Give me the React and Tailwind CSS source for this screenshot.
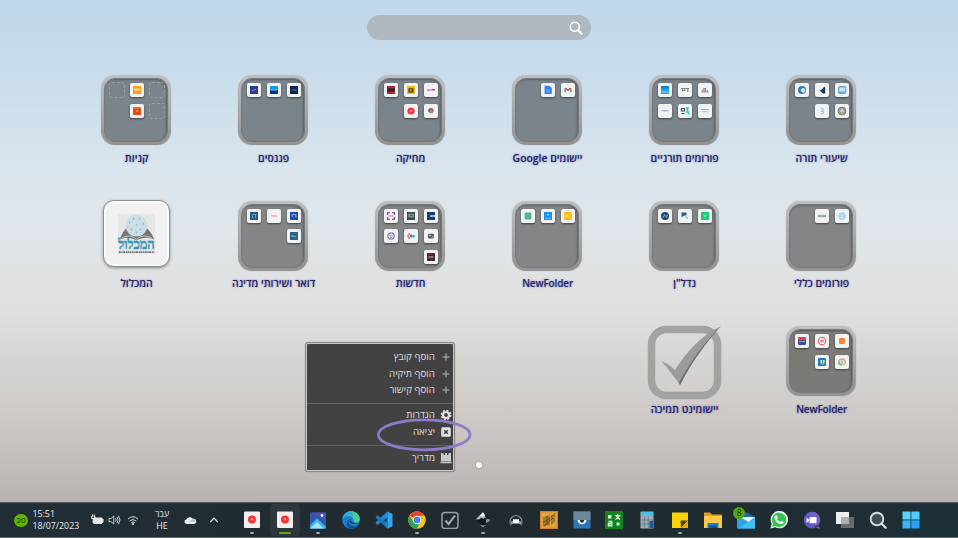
import React from "react";

const R = (x, y, w, h, fill, rx = 0) => <rect key={`${x}-${y}-${fill}`} x={x} y={y} width={w} height={h} fill={fill} rx={rx} />;

// Drawings for the miniature app icons, on a 14 x 14 canvas
const art = {
  orange: <>{R(3, 3, 8, 8, "#ff9a1a")}{R(4, 5.6, 6, 2, "#ffe0a8", 1)}</>,
  red: <>{R(3, 3, 8, 8, "#e8481c")}{R(3, 3, 8, 1.6, "#f0742e")}{R(6, 6.5, 2.5, 1, "#f7a58a")}</>,
  navy: <>{R(3, 3, 8, 8, "#2c3990")}<path d="M4.8 7.8 9.2 6.2" stroke="#8f9ad8" strokeWidth=".9" /></>,
  blueSplit: <>{R(3, 3, 8, 4.5, "#149be4")}{R(3, 7, 8, 4, "#0b3580")}{R(4, 6.6, 6, 0.9, "#8fd2f7")}</>,
  darkNavy: <>{R(3, 3, 8, 8, "#0c2353")}{R(4.5, 6.4, 5, 1.2, "#3e7c98")}</>,
  redBlack: <>{R(3, 3, 8, 8, "#bd2430")}{R(3, 5.2, 8, 3.4, "#30282b")}</>,
  yellow: <>{R(3, 3, 8, 8, "#f0bc19")}{R(4.4, 5.2, 5.2, 4.4, "#5b4a14")}{R(6, 6, 1.6, 2.5, "#c89d20")}</>,
  pinkText: <>{R(3, 6.3, 8, 1.5, "#d980ad")}{R(8, 6, 3, 1, "#bb3b80")}</>,
  redDot: <><circle cx="7" cy="7" r="3.6" fill="#fb3440" /><circle cx="7" cy="7" r="1" fill="#fba2a6" /></>,
  tinyPerson: <><circle cx="7" cy="6.6" r="2.6" fill="#8d6b62" /><path d="M5 5.5v2.5" stroke="#3e5a92" fill="none" /><circle cx="7.3" cy="7.6" r="1.1" fill="#e49a50" /></>,
  docs: <><path d="M3.6 2.8h4.8l2.4 2.3v6H3.6z" fill="#2f83f5" /><path d="M5.2 7h3.8M5.2 8.7h3.8" stroke="#8dbcff" strokeWidth=".8" /></>,
  gmail: <><path d="M4.2 9V5.2" stroke="#4285f4" strokeWidth="1.4" /><path d="M9.8 9V5.2" stroke="#34a853" strokeWidth="1.4" /><path d="m4.2 5.2 2.8 2.1 2.8-2.1" stroke="#ea4335" strokeWidth="1.4" fill="none" /></>,
  sky: <>{R(3, 3, 8, 8, "#2aa2da")}{R(3, 3, 8, 2.5, "#1685bf")}{R(3.5, 8.5, 7, 1, "#8ed2ef")}</>,
  grayText: <path d="M3 5.5h8M4.5 5.5v3M6.8 5.5V8M9.8 5.5v3.5M4.5 7.5h3" stroke="#85878d" strokeWidth="1.2" />,
  grayBuilding: <path d="M3.5 8.8h7M4.5 8V6.5M6 8V5.5h1.5V8M9.3 8V7" stroke="#8b8e94" strokeWidth="1.2" fill="none" />,
  lilacText: <>{R(3.2, 6.2, 7.6, 1, "#aaa4c4")}{R(5, 7.2, 4, .7, "#c4c0d7")}</>,
  greenCross: <><path d="M3.5 4.5h3v2.5h-3zM3.5 9.5h3" stroke="#4b4d52" strokeWidth="1.2" fill="none" /><path d="M8 4h2.8M9.5 4v3M8 8h2.5v2.5" stroke="#27c9b8" strokeWidth="1.6" fill="none" /></>,
  paleText: <>{R(3, 5, 8, 1, "#abb1b1")}{R(3.3, 7, 7.4, .8, "#c6c9c9")}{R(4, 8.5, 6, .6, "#d6d8d8")}</>,
  swirl: <><circle cx="7" cy="7" r="4" fill="#2e78ba" /><circle cx="8.3" cy="7.3" r="2.4" fill="#dbe8f2" /><path d="M8.5 4.5q2.5.5 2 3" stroke="#3f86c4" fill="none" /></>,
  blackArrow: <path d="M10.2 3.8v6.8H7.5L6.5 9 4.5 7.2l2.4-.8 1.5-2z" fill="#173a52" />,
  screen: <>{R(3, 3, 8.4, 8, "#68a9d0", 2)}{R(4.2, 4.6, 6, 4, "#c9e2f0", 1)}</>,
  brace: <path d="M5.5 4.2C9 4 9 6 7.6 6.8 9 7.5 9 10 5.5 10M5.5 7h3" stroke="#81b0c6" strokeWidth=".9" fill="none" />,
  seal: <><circle cx="7" cy="7" r="4" fill="#9d9c98" /><path d="M4.8 7.8 7 4.6l2 3.2z" fill="#e0e2e4" /><circle cx="7" cy="8.6" r="1.2" fill="#cbb86c" /><circle cx="7" cy="7" r="4" stroke="#6b7076" fill="none" strokeWidth=".7" /></>,
  steel: <>{R(3, 3, 8, 8, "#285b86")}<path d="M5.5 5.5h3v3.5M5.5 6.5v2.5" stroke="#8fadc6" fill="none" strokeWidth=".8" /></>,
  thinRed: <path d="M4.5 6.2q1.5 1.5 3 .7t2.5.8" stroke="#ea8587" fill="none" strokeWidth="1" />,
  royal: <>{R(3, 3, 8, 8, "#1c4eae")}<path d="M4.8 5.5h4v3M5.3 6v2" stroke="#b4c8f0" fill="none" strokeWidth=".8" /></>,
  teal: <>{R(3, 3, 8, 8, "#2b6586")}<path d="M4.5 7.2h4.5M5 6v1" stroke="#8fb8cb" /></>,
  purpleFrame: <><path d="M3.6 6V3.6H6M8 3.6h2.4V6M10.4 8v2.4H8M6 10.4H3.6V8" stroke="#8050a7" strokeWidth="1.3" fill="none" />{R(4.5, 6.4, 5, 1.2, "#c888bb")}</>,
  darkScreen: <>{R(3, 3, 8, 8, "#374d51")}{R(4.5, 4.8, 5, 3.5, "#a9b8b5")}{R(5.3, 5.5, 3.3, 2, "#4c6064")}</>,
  darkBlue: <>{R(3, 3, 8, 8, "#1d3e68")}{R(6, 6, 5, 2, "#9bb3cf")}</>,
  purpleRing: <><circle cx="7" cy="7" r="3.2" stroke="#8b7abd" fill="none" strokeWidth="1.2" /><path d="M5.3 6.2 7 7.6l1.8-2M6 8.4h2" stroke="#9d8fca" fill="none" /></>,
  redBlue: <><path d="M6 4.8c-2.5 0-2.5 4.4 0 4.4" stroke="#f0737d" strokeWidth="1.7" fill="none" />{R(6, 5.5, 2.5, 3, "#337da6", 1)}{R(8.3, 6, 2.8, 2.6, "#49b0d8", 1)}</>,
  blackText: <>{R(4, 4.8, 6, 4.6, "#55606b", .8)}<path d="M5.2 6.5h2M8 8h1.5" stroke="#d5d9dc" strokeWidth=".8" /></>,
  darkRed: <>{R(3, 3, 8, 8, "#48282c")}{R(4.5, 6.3, 5, 1.5, "#a9898c")}{R(4.5, 4.2, 4, .8, "#8d3535")}</>,
  greenSq: R(3.6, 3.6, 6.8, 6.8, "#4fb698", 1),
  appBlue: <>{R(3, 3, 8, 8, "#1590f5")}<circle cx="7" cy="5.8" r="1" fill="#a9d7ff" />{R(4, 8.8, 6, .8, "#8ec9fc")}</>,
  amber: <>{R(3, 3, 8, 8, "#fdbd16")}{R(4, 6, 3.5, 2.3, "#f0d27d")}</>,
  darkRound: <><circle cx="7" cy="7" r="4" fill="#244569" /><path d="M4.5 9 6.5 6l2 2 1.2-2.5" stroke="#5f9ed2" strokeWidth="1.2" fill="none" /></>,
  shardK: <><path d="M3.5 3.5h5v3H6l-2.5 2z" fill="#3a5a75" /><path d="M7 7.5 9.8 9.5" stroke="#9ab0c0" strokeWidth="1.2" /></>,
  greenPin: <>{R(3, 3, 8, 8, "#22c880")}<path d="M5 5.7h4L7 8.8z" fill="#72dfb0" /></>,
  news: <>{R(3, 5.8, 8, 2.3, "#849a9a")}{R(4, 6.5, 6, .7, "#c1cccc")}</>,
  paleBlue: <><circle cx="7" cy="7" r="3.8" fill="#a5d3e8" /><path d="M4 6h6M4.5 8.5h5M6.6 4v6" stroke="#d2eaf4" strokeWidth=".7" /></>,
  flag: <>{R(3, 3, 8, 8, "#334c9b", 1.5)}{R(3, 3, 8, 3.2, "#e4434d", 1)}{R(4, 7.3, 6, .8, "#afbee5")}</>,
  redRing: <><circle cx="7" cy="7" r="3.7" stroke="#e86a70" fill="none" strokeWidth="1.2" />{R(4.8, 5.8, 4.4, 2.4, "#ed8a8e", 1)}</>,
  orangeSm: R(4, 4, 6, 6, "#fb8428", 1),
  blueLeaf: <>{R(3, 3, 8, 8, "#187bd0", 1)}<path d="M5.4 5h4.3v3L7.3 10 5.4 8z" fill="#c9e4a4" /><path d="M7.5 5v4" stroke="#38965b" /></>,
  chromeish: <><path d="M3.9 6a3.4 3.4 0 0 1 6.2 0" stroke="#e49a83" strokeWidth="1.4" fill="none" /><path d="M3.9 6v2.7L7 10" stroke="#6ebe91" strokeWidth="1.8" fill="none" /><path d="M10.1 6v2.7L7.5 10" stroke="#e6ba61" strokeWidth="1.7" fill="none" /><circle cx="7" cy="7" r="1.5" fill="#9ac4e3" /></>,
};

function Mini({ name }) {
  if (!name) return <span />;
  if (name === "slot")
    return <span className="-m-px h-4 w-4 rounded-[3px] border border-dashed border-[#949ea5]" />;
  return (
    <span className="h-[14px] w-[14px] rounded-[2px] bg-[#f1f2f3] shadow-[0_1px_2px_rgba(0,0,0,0.5)]">
      <svg className="block h-full w-full" viewBox="0 0 14 14">{art[name]}</svg>
    </span>
  );
}

const tones = {
  cool: "bg-[#7b848a]",
  mid: "bg-[#838586]",
  warm: "bg-[#7b7a77]",
};

function Folder({ minis, tone }) {
  return (
    <div className="h-[70px] w-[70px] rounded-[14px] bg-linear-to-b from-[#bcbebf] to-[#929292] p-[3px] shadow-[0_0_1px_rgba(110,110,110,0.5)]">
      <div className={`grid h-full w-full grid-cols-[14px_14px_14px] auto-rows-[14px] gap-x-[6px] gap-y-[6.5px] rounded-[11px] border border-[#777a7c] pt-[4px] pl-[5px] shadow-[inset_-1px_1px_2px_rgba(50,50,50,0.45)] ${tones[tone]}`}>
        {minis.map((m, i) => <Mini key={i} name={m} />)}
      </div>
    </div>
  );
}

function Hamichlol() {
  return (
    <div className="h-[67px] w-[67px] rounded-[11px] border border-[#8e9192] bg-[#f1f1f1] shadow-[0_1px_3px_rgba(0,0,0,0.4),inset_0_0_0_1.5px_#fff]">
      <svg className="block h-full w-full" viewBox="0 0 66 66">
        <rect x="14" y="13" width="38" height="41" fill="#e6e6e6" />
        <path d="M16 39c3-7 5-11 9-12l8 8 8-8c4 1 7 5 10 12-7-3-12-2-18 1-6-3-10-4-17-1z" fill="#777" />
        <path d="M18 38c4-3 10-4 15 1 5-5 11-4 16-1" stroke="#c8c8c8" fill="none" />
        <circle cx="33" cy="25" r="11" fill="#cbdde5" />
        <path d="M26 21v2M30 17v2M36 17v2M40 22v2M33 23v2M28 28v2M37 28v2M33 31v2M24 26v1" stroke="#84bccf" strokeWidth="1.2" />
        <text x="33" y="49" textAnchor="middle" textLength="37" lengthAdjust="spacingAndGlyphs" fontSize="14" fontWeight="700" fill="#3798b4" stroke="#3798b4" strokeWidth=".5" fontFamily="'Liberation Serif', 'DejaVu Sans', serif">המכלול</text>
        <path d="M15 52h36" stroke="#6e7475" strokeWidth="1.8" strokeDasharray="2 .7 1.2 .5" />
      </svg>
    </div>
  );
}

function CheckApp() {
  return (
    <svg className="mt-[3px] h-[75px] w-[75px] shrink-0" viewBox="0 0 75 75">
      <rect x="4.5" y="4.5" width="66" height="66" rx="15" fill="none" stroke="#a2a2a2" strokeWidth="7.5" />
      <path d="M14 36c7 3 11 6 14 9C41 25 54 11 74 1 59 18 45 36 33 60 27 52 21 43 14 36z" fill="#9b9b9a" />
      <path d="M74 1C59 18 45 36 33 60l-1-2.5C44 35 58 17 74 1z" fill="#6f6f6e" />
    </svg>
  );
}

const _ = null;
const items = [
  ["קניות", "cool", ["slot", "orange", "slot", _, "red", "slot"]],
  ["פננסים", "cool", ["navy", "blueSplit", "darkNavy"]],
  ["מחיקה", "cool", ["redBlack", "yellow", "pinkText", _, "redDot", "tinyPerson"]],
  ["יישומים Google", "cool", [_, "docs", "gmail"]],
  ["פורומים תורניים", "cool", ["sky", "grayText", "grayBuilding", "lilacText", "greenCross", "paleText"]],
  ["שיעורי תורה", "cool", ["swirl", "blackArrow", "screen", _, "brace", "seal"]],
  ["המכלול", "site"],
  ["דואר ושירותי מדינה", "mid", ["steel", "thinRed", "royal", _, _, "teal"]],
  ["חדשות", "mid", ["purpleFrame", "darkScreen", "darkBlue", "purpleRing", "redBlue", "blackText", _, _, "darkRed"]],
  ["NewFolder", "mid", ["greenSq", "appBlue", "amber"]],
  ["נדל\"ן", "mid", ["darkRound", "shardK", "greenPin"]],
  ["פורומים כללי", "mid", [_, "news", "paleBlue"]],
  ["יישומינט תמיכה", "check"],
  ["NewFolder", "warm", ["flag", "redRing", "orangeSm", _, "blueLeaf", "chromeish"]],
];

function Item({ item, className = "" }) {
  const [label, kind, minis] = item;
  return (
    <div className={`flex h-[125.5px] flex-col items-center ${className}`}>
      <div className="flex h-[70px] items-center justify-center">
        {kind === "site" ? <div className="-mt-1 ml-px"><Hamichlol /></div> : kind === "check" ? <CheckApp /> : <Folder minis={minis} tone={kind} />}
      </div>
      <div
        dir="rtl"
        className={`mt-[5.5px] ml-[0.6px] leading-[15px] whitespace-nowrap text-[#24246c] [text-shadow:0_0_2px_rgba(60,60,140,0.6)] ${label === "NewFolder" ? "text-[10px] font-semibold tracking-[-0.15px]" : "text-[10.4px] font-semibold"}`}
      >
        {label}
      </div>
    </div>
  );
}

const Plus = () => <path d="M6 2.5v7M2.5 6h7" stroke="#b9b9b9" strokeWidth="1" />;
const Gear = () => (
  <>
    <circle cx="6" cy="6" r="3" fill="none" stroke="#e4e4e4" strokeWidth="2.2" />
    <circle cx="6" cy="6" r="4.6" fill="none" stroke="#e4e4e4" strokeWidth="1.5" strokeDasharray="1.9 1.71" />
  </>
);
const Exit = () => (
  <>
    <rect x="1.2" y="1.2" width="9.6" height="9.6" rx="1.5" fill="#e2e2e2" />
    <path d="m4.2 4.2 3.6 3.6M7.8 4.2 4.2 7.8" stroke="#424242" strokeWidth="1.6" />
  </>
);
const Guide = () => <path d="M1 1h2l1 2h1V1h2v2h1l1-2h2v8H1zM.5 9.5h11v1.7H.5z" fill="#cacaca" />;

function MenuRow({ icon, children }) {
  return (
    <div className="flex h-[16.5px] items-center justify-start gap-[5px] pr-px">
      <svg className="h-3 w-3" viewBox="0 0 12 12">{icon}</svg>
      <span className="text-[9.8px] leading-none font-medium text-[#dedede]">{children}</span>
    </div>
  );
}

function ContextMenu() {
  return (
    <div dir="rtl" className="absolute top-[342px] left-[305px] h-[130px] w-[150px] rounded-[3px] border border-[#8a8a8a] bg-[#c6c6c6] p-[1px] shadow-[0_0_1px_rgba(0,0,0,0.4)]">
      <div className="flex h-full flex-col rounded-[1px] bg-[#424242] pt-[5px]">
        <MenuRow icon={<Plus />}>הוסף קובץ</MenuRow>
        <MenuRow icon={<Plus />}>הוסף תיקיה</MenuRow>
        <MenuRow icon={<Plus />}>הוסף קישור</MenuRow>
        <div className="mt-[4px] mb-[3.5px] h-px bg-[#626262]" />
        <MenuRow icon={<Gear />}>הגדרות</MenuRow>
        <MenuRow icon={<Exit />}>יציאה</MenuRow>
        <div className="mt-[4.5px] mb-[4.5px] h-px bg-[#626262]" />
        <MenuRow icon={<Guide />}>מדריך</MenuRow>
      </div>
    </div>
  );
}

const recorder = (
  <>
    <rect x="1" y=".5" width="16" height="16.5" rx="1" fill="#f3efee" />
    <circle cx="9" cy="8.5" r="4" fill="#f5323b" />
    <circle cx="9" cy="8.3" r="1.2" fill="#fa9a96" />
  </>
);

const apps = [
  { dot: true, art: recorder },
  { active: true, art: recorder },
  { dot: true, art: <>
    <rect x="1" y="1.5" width="16" height="16" rx="1" fill="#3159ae" />
    <path d="M1 1.5h16v8L9 6z" fill="#4b4fae" />
    <path d="M1 17.5v-3l7-7.2 9 8.7v1.5z" fill="#3cb2f0" />
    <path d="M1 17.5 8 11l7 6.5z" fill="#a3e0fb" />
    <circle cx="13" cy="4.5" r="1.4" fill="#e8f0ff" />
  </> },
  { art: <>
    <circle cx="9" cy="9" r="8.8" fill="#1a80cf" />
    <path d="M.5 8C2 1.5 7 0 10 .3c5 .3 8 4.5 7.8 8.2-.3 2.8-3 3.8-6.3 2.8C13 7 8.5 4 4.5 5 2.5 5.6 1 6.8.5 8z" fill="#47cd9c" />
    <path d="M.5 8C2 1.5 7 0 10 .3l1 5.5C7 3.5 3 4.5.5 8z" fill="#2cacd9" />
    <path d="M7 8c-2 4 1 8.5 8.5 7A8.8 8.8 0 0 1 9 17.8C4.5 17.5 3 11 7 8z" fill="#124e96" />
    <path d="M9.3 7.5c-1.5 1-1.5 5.5 7.7 4.3-4 1.7-8.5 1.2-9.3-1.3-.3-1.3.4-2.7 1.6-3z" fill="#1c2b33" />
  </> },
  { art: <>
    <path d="M12.5.5 17.5 3v12.2L12.5 17.7z" fill="#35a5ee" />
    <path d="M12.5.5 1 11l-.5 1.3L2.5 14 13.5 5.6z" fill="#2489d3" />
    <path d="M12.5 17.7 1 7l-.5-1.2L2.5 4.3 13.5 12.5z" fill="#1877bf" />
    <path d="M12.5.5v17.2l-1-1V1.5z" fill="#238dd9" />
  </> },
  { dot: true, art: <>
    <circle cx="9" cy="9" r="8.8" fill="#f5c12b" />
    <path d="M9 9 1.4 4.6A8.8 8.8 0 0 1 16.6 4.6L9 5z" fill="#e64335" />
    <path d="M1.4 4.6A8.8 8.8 0 0 0 8.5 17.8L12.5 11 5.5 11z" fill="#2ea450" />
    <circle cx="9" cy="9" r="4.3" fill="#f5f7f9" />
    <circle cx="9" cy="9" r="3.3" fill="#4285f4" />
  </> },
  { art: <>
    <rect x="1" y="1.5" width="16" height="16" rx="3" fill="none" stroke="#9a9fa1" strokeWidth="1.5" />
    <path d="m4.5 9.5 3 3.7L14 4.5" fill="none" stroke="#a9adaf" strokeWidth="2" />
  </> },
  { dot: true, art: <>
    <path d="M9 1 1.5 8.5 4 11l2 .6L5 13l4 3 4-3-1-1.5 2-.5 2.5-2.5z" fill="#15171a" />
    <path d="M9 1 1.5 8.5l4-.2L7.3 6.5l2 1.2L11 6.5l1.5 1.3z" fill="#b6bdc5" />
    <path d="M9 1.5 6 4.5l2.5 1L11 4z" fill="#eef0f2" />
    <path d="m12.5 7.8 4 1-2.5 2.4-2.5.5z" fill="#939ca2" />
    <path d="m5.5 13.5 3.5 1 3.5-1-3.5 3z" fill="#8a9298" />
  </> },
  { art: <>
    <path d="M4.2 14.2A6 6 0 1 1 13.8 14.2" fill="none" stroke="#7c8787" strokeWidth="1.4" />
    <path d="M6 8.2h6v4.3H6z" fill="#f1f4f4" />
    <path d="M5 10v3M13 10v3" stroke="#d1d6d6" strokeWidth="1.3" />
  </> },
  { art: <>
    <rect x="0" y="0" width="18" height="18" fill="#cf8429" />
    <rect x="1.2" y="1.2" width="15.6" height="15.6" fill="#e2a43e" />
    <path d="m3 6 7-2v10l-7 1.5zM11 4h4v7l-4 3z" fill="#a87a30" />
    <path d="M3 11c4-1 8-4 12-9M7 5v9M4 15l9-8" stroke="#5c4a29" fill="none" strokeWidth=".9" />
  </> },
  { art: <>
    <rect x=".5" y=".5" width="17" height="17" fill="#2f76b6" />
    <path d="M.5.5h17v8.5H.5z" fill="#6e899a" />
    <path d="M4.5 9h9a4.5 4.2 0 0 1-9 0z" fill="#f5f7f9" />
    <path d="M7 9h4v.8a2 2 0 0 1-4 0z" fill="#1d2f3b" />
  </> },
  { art: <>
    <rect x="0" y="0" width="18" height="18" fill="#118420" />
    <rect x="3" y="4" width="3.5" height="3.5" fill="#e4f1e5" />
    <path d="M10 4.5h5.5M12.7 3v1.5M10.5 8.5 14.5 5M11 5l4 3.5" stroke="#e4f1e5" fill="none" strokeWidth="1.1" />
    <path d="M3.5 10.5h3.2v4.2H3.5v-2.2h3" stroke="#e4f1e5" strokeWidth="1.4" fill="none" />
    <path d="M11.5 11.5h3v3h-3z" fill="#d4e8d5" />
  </> },
  { art: <>
    <rect x="2.5" y=".5" width="13" height="17" fill="#9facb7" />
    <rect x="3" y="1" width="12" height="3.8" fill="#49c2ea" />
    <path d="M6.5 5.5V17M10.3 5.5V17M3 9h12M3 13h12" stroke="#667784" strokeWidth=".8" />
    <rect x="11.5" y="10" width="3.5" height="7" fill="#1e55a1" />
  </> },
  { dot: true, art: <>
    <path d="M1 1.5h16v9l-6 6.5H1z" fill="#fbd202" />
    <path d="M9.5 9.5H17L10 17z" fill="#4b431c" />
    <path d="M17 9.5V17h-7z" fill="#e3ad0a" />
  </> },
  { art: <>
    <path d="M0 1.5h6l2 2h10v13H0z" fill="#e09a1d" />
    <path d="M0 5h18v12H0z" fill="#fcc949" />
    <path d="M3.5 12h11v5h-11z" fill="#1780cf" />
    <path d="M5 14.5h8V17H5z" fill="#0c549c" />
  </> },
  { badge: "8", art: <>
    <path d="M1 6 9 1l9 5v11H1z" fill="#1269ae" />
    <path d="M0 6h18v11.5H0z" fill="#2aa6e8" />
    <path d="M3 6h15l-6.5 5z" fill="#eaf5fb" />
    <path d="m1 17.5 17-10.5v10.5z" fill="#43bef3" />
  </> },
  { art: <>
    <path d="m.5 17.5 1.2-4.7A8.7 8.7 0 1 1 5.2 16.3z" fill="#eef6ef" />
    <path d="m2 16 1-3.3a7.2 7.2 0 1 1 2.5 2.4z" fill="#35c455" />
    <path d="M6 4.5 7 4.7l.8 2-.8 1.2c.7 1.4 1.8 2.4 3.3 3l1-1.2 2.3 1.2c0 1.5-1.3 2.3-2.7 2.1C7.5 12.3 4.7 9.4 4.5 6.7 4.5 5.7 5.2 4.8 6 4.5z" fill="#fff" />
  </> },
  { art: <>
    <path d="M9 .8A8.3 8.3 0 1 1 9 17.4 8.3 8.3 0 1 1 9 .8zM11 16l6 2-2-4z" fill="#5e5bc0" />
    <path d="M9 .8A8.3 8.3 0 0 1 17 11l-7 6C16 12 13 3 3 4.5z" fill="#7e68cb" opacity=".6" />
    <rect x="6.5" y="6" width="7" height="6.3" rx=".8" fill="#fff" />
    <path d="m6 8.5-2.5-1.7v5L6 10z" fill="#fff" />
  </> },
  { art: <>
    <rect x="5" y="6" width="13" height="11" fill="#676b6c" />
    <rect x="0" y="1" width="13" height="12" fill="#ededed" />
    <rect x="5" y="6" width="8" height="7" fill="#adafaf" />
  </> },
  { art: <>
    <circle cx="8" cy="8" r="6.3" fill="#3f4d54" stroke="#d8dcde" strokeWidth="1.9" />
    <path d="m12.7 12.7 4 4" stroke="#e0e3e5" strokeWidth="2.2" strokeLinecap="round" />
  </> },
  { art: <>
    <path d="M.5.5h8v8h-8z" fill="#5bd3fc" />
    <path d="M9.3.5h8.2v8H9.3z" fill="#54c9fb" />
    <path d="M.5 9.3h8v8.2h-8z" fill="#38b2f8" />
    <path d="M9.3 9.3h8.2v8.2H9.3z" fill="#2aa3f5" />
  </> },
];

function TaskApp({ app }) {
  return (
    <div className="flex h-8 flex-1 justify-center">
      <div className={`flex h-[32px] w-[30px] flex-col items-center rounded-[3px] pt-[7px] ${app.active ? "bg-[#2d373d]" : ""}`}>
        <div className="relative h-[18px] w-[18px]">
          <svg className="block h-full w-full" viewBox="0 0 18 18">{app.art}</svg>
          {app.badge && <span className="absolute -top-1 -left-[4px] flex h-3 w-3 items-center justify-center rounded-full bg-[#59a60a] text-[8.5px] leading-none text-[#14280a]">{app.badge}</span>}
        </div>
        {app.dot && <span className="mt-[3px] h-[2px] w-[4px] rounded-full bg-[#a3a8aa]" />}
        {app.active && <span className="mt-[3px] h-[2px] w-3 rounded-full bg-[#65ac0c]" />}
      </div>
    </div>
  );
}

function Taskbar() {
  return (
    <div className="flex h-9 items-center border-t border-b border-t-[#555b5f] border-b-[#5c6668] bg-linear-to-r from-[#222e37] via-[#212a2e] to-[#1d3037] text-[#e9ecee]">
      <div className="flex w-[235.5px] shrink-0 items-center">
        <span className="ml-[14px] flex h-[13px] w-[14px] items-center justify-center rounded-full bg-[#62b300] text-[8px] leading-none text-[#17310a]">20</span>
        <div className="ml-[4.5px] w-[57.5px] text-[8.8px] leading-[12px]">
          <div>15:51</div>
          <div>18/07/2023</div>
        </div>
        <svg className="h-[14px] w-[14px]" viewBox="0 0 14 14">
          <path d="M3.5 4.5H12v6.5H3.5z" fill="#e4e7e9" />
          <path d="M12 6h1v3.3h-1zM1.8 3v2.5h3V3M2.5 1.5v2M4.3 1.5v2M3.2 5.5V10" stroke="#fff" fill="none" />
        </svg>
        <svg className="ml-[3px] h-[14px] w-[14px]" viewBox="0 0 14 14" fill="none" stroke="#d5d9dc">
          <path d="M2 5.5h2L6.8 3v8L4 8.7H2zM8.5 5.5q1 1.5 0 3M10 4q2 3 0 6M11.5 2.8q3 4 0 8.4" strokeWidth=".9" />
        </svg>
        <svg className="ml-[5px] h-[14px] w-[14px]" viewBox="0 0 14 14" fill="none" stroke="#d8dcdf">
          <path d="M2 6q5-4.5 10 0M3.7 8q3.3-3 6.6 0M5.3 9.7q1.7-1.5 3.4 0" strokeWidth="1" />
          <circle cx="7" cy="11" r=".9" fill="#fff" stroke="none" />
        </svg>
        <div className="ml-[10px] w-6 text-center text-[8.8px] leading-[12px]">
          <div>עבר</div>
          <div>HE</div>
        </div>
        <svg className="ml-[9px] h-[14px] w-[14px]" viewBox="0 0 14 14">
          <path d="M3.5 11a2.3 2.3 0 0 1-.3-4.5A3.8 3.3 0 0 1 10 5.8 2.8 2.6 0 0 1 10.8 11z" fill="#eceff0" />
          <path d="M5 9 10 6.2a2.5 2.5 0 0 1 2.5 2.8z" fill="#bcc1c4" />
        </svg>
        <svg className="ml-[10px] h-[14px] w-[14px]" viewBox="0 0 14 14"><path d="m3.3 9 3.7-3.8L10.7 9" stroke="#dfe3e5" strokeWidth="1.2" fill="none" /></svg>
      </div>
      <div className="flex w-[692px]">
        {apps.map((a, i) => <TaskApp key={i} app={a} />)}
      </div>
    </div>
  );
}

export default function App() {
  return (
    <div className="relative flex h-[538px] w-[958px] flex-col overflow-hidden bg-[#8c9194] font-['Open_Sans','DejaVu_Sans',sans-serif]">
      <div className="flex h-[502px] flex-col items-center bg-[linear-gradient(to_bottom,#bfd8eb_0%,#c8dceb_14%,#dbe5ed_35%,#dfe6eb_44%,#dfdfdd_62%,#cbc7c4_85%,#b9b4b1_100%)]">
        <div className="mt-[15px] flex h-[25px] w-[224px] shrink-0 items-center justify-end rounded-full bg-[#b0b9c0] pr-2">
          <svg className="h-[14px] w-[14px]" viewBox="0 0 14 14" fill="none" stroke="#fff" strokeWidth="1.5">
            <circle cx="5.8" cy="5.8" r="4.5" />
            <path d="m9.2 9.2 4 4" strokeWidth="2" />
          </svg>
        </div>
        <div className="mt-[35px] -ml-[0.4px] grid w-[822px] grid-cols-6">
          {items.map((item, i) => <Item key={i} item={item} className={i === 12 ? "col-start-5" : ""} />)}
        </div>
      </div>
      <Taskbar />
      <ContextMenu />
      <svg className="absolute top-[416px] left-[375px] h-[36px] w-[98px]" viewBox="0 0 98 36">
        <ellipse cx="49.2" cy="18.8" rx="46" ry="15" fill="none" stroke="#8d7bc5" strokeWidth="2.8" />
      </svg>
      <span className="absolute top-[462px] left-[476px] h-[6px] w-[6px] rounded-full bg-white shadow-[0_0_2px_rgba(0,0,0,0.35)]" />
    </div>
  );
}
